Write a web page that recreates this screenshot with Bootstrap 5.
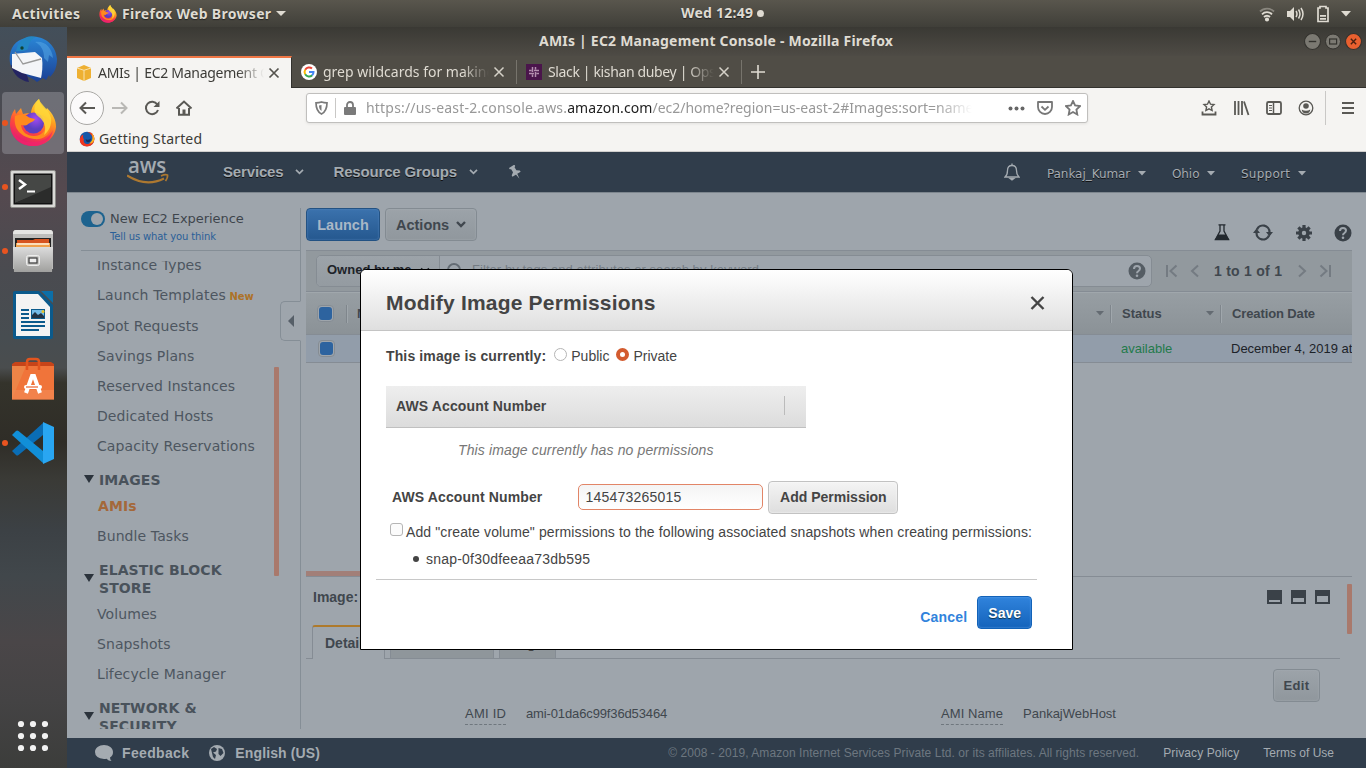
<!DOCTYPE html>
<html lang="en">
<head>
<meta charset="utf-8">
<title>AMIs | EC2 Management Console</title>
<link href="https://cdn.jsdelivr.net/npm/bootstrap@5.3.0/dist/css/bootstrap.min.css" rel="stylesheet">
<style>
:root{--page:#9ea5ac;--rule:#858c94;--navy:#303d4b;--ink:#3e454c;--salmon:#a9796c}
body{width:1366px;height:768px;overflow:hidden;font-family:"Liberation Sans",Arial,sans-serif;font-size:14px;line-height:18px;color:#444;background:var(--page)}
svg{display:block;flex:none}
.ui{font-family:"Noto Sans",sans-serif}
.topbar{height:27px;background:linear-gradient(#59564d,#403f39);color:#dfdbd2;font-weight:600;letter-spacing:.25px;text-shadow:0 1px 1px #222}
.topbar span,.titlebar span{font-weight:700}
.w-act{width:99px;padding-left:12px;letter-spacing:.33px}
.w-app{width:154px;margin-left:5px;letter-spacing:.32px}
.w-clock{left:681px;top:4px}
.dot{width:7px;height:7px;border-radius:50%;background:#dfdbd2}
.tray{margin-left:auto;width:107px}
.shell{height:741px}
.dock{width:67px;background:linear-gradient(180deg,#434f5a 0,#4b4a50 12%,#55494f 22%,#4a4b50 33%,#474d51 42%,#4a4d4e 46%,#34332b 48%,#2f2d27 56%,#3a3a36 61%,#3c4145 68%,#41474b 74%,#4a4648 83%,#444344 91%,#3c3d3b 100%)}
.slot{height:64px;padding-right:1px}
.slot.on::after{content:"";position:absolute;inset:1px 3px 1px 2px;border-radius:4px;background:rgba(170,170,180,.38)}
.slot svg{z-index:1}
.slot.live::before{content:"";position:absolute;left:2px;top:29px;width:6px;height:6px;border-radius:50%;background:#e95420;z-index:2}
.win{width:1299px}
.titlebar{height:29px;background:linear-gradient(#3a3934,#4e4b45);color:#dfdbd2;letter-spacing:.21px}
.titlebar .ttl{padding-left:472px;padding-bottom:2px}
.tabstrip{height:32px;background:#504d46;color:#dfdbd2}
.tabstrip .inact{border-bottom:1px solid #33322e}
.tab-a{width:225px;background:#f5f4f2;border-top:2px solid #f07746;border-right:1px solid #33322e;color:#3c3b37;padding-left:9px}
.tab-i{width:225px;padding-left:9px}
.tab-i::after{content:"";position:absolute;right:0;top:4px;height:24px;width:1px;background:#77746c}
.lbl{overflow:hidden;white-space:nowrap;width:166px;margin-left:6px;-webkit-mask-image:linear-gradient(90deg,#000 84%,transparent 100%);mask-image:linear-gradient(90deg,#000 84%,transparent 100%)}
.toolrow{height:40px;background:#f5f4f2}
.backb{width:34px;height:34px;border-radius:50%;border:1px solid #a9a8a5;background:#fbfafa}
.urlbar{left:239px;top:5px;width:782px;height:30px;border:1px solid #c0bfbd;border-radius:3px;background:#fff;box-shadow:0 1px 3px rgba(0,0,0,.08);color:#989898}
.url{width:608px;overflow:hidden;white-space:nowrap;letter-spacing:.07px;-webkit-mask-image:linear-gradient(90deg,#000 94%,transparent 100%);mask-image:linear-gradient(90deg,#000 94%,transparent 100%)}
.url b{font-weight:400;color:#222}
.vline{width:1px;background:#c9c8c6}
.marks{height:24px;background:#f5f4f2;border-bottom:1px solid #d0cfcd;color:#3c3b37;padding:0 0 2px 12px;letter-spacing:.17px}
.awsnav{height:40px;background:var(--navy);color:#a4abb1;font-weight:700;font-size:15px;letter-spacing:-.16px;text-shadow:0 1px 0 #111}
.awsnav .dj{font:12px/18px "DejaVu Sans",sans-serif;letter-spacing:-.05px;padding-top:3px}
.awsnav .dj + svg{margin-top:2px}
.dj{font-family:"DejaVu Sans",sans-serif}
.console{height:546px;border-top:1px solid #7d868e;background:var(--page)}
.side{width:234px;padding:15px 0 9px 14px}
.side-in{border-right:1px solid #858e96;height:521px}
.exp{height:43px;border-bottom:1px solid #858e96}
.toggle{width:24px;height:16px;border-radius:8px;background:#1d638f;margin-top:3px}
.toggle i{display:block;width:12px;height:12px;border-radius:50%;background:#9ea5ac;margin:2px 0 0 10px}
.exp1{font-size:13px;letter-spacing:-.05px;line-height:21px;color:#3e454c}
.exp2{font-size:10px;line-height:16px;letter-spacing:-.12px;color:#2a5f98}
.menu{margin-top:10px;height:468px;overflow:hidden;color:#4d5660;letter-spacing:.09px}
.menu ul{margin:-11px 0 0;padding:0;list-style:none}
.menu li{height:30px;line-height:30px;padding-left:16px}
.menu li:nth-child(2){height:31px}
.menu li.h{height:auto;line-height:18px;font-weight:700;padding:10px 50px 2px 18px;color:#49525b}
.menu li.h::before{content:"";position:absolute;left:3px;top:calc(50% - 1px);border:5px solid transparent;border-top:8px solid #2b333c;border-bottom:0}
.new{font-size:10px;font-weight:700;color:#ad7228;letter-spacing:-.1px}
.sbar{background:var(--salmon);width:5px;border-radius:1px}
.collapse-tab{left:213px;top:108px;width:21px;height:40px;border:1px solid #858e96;border-right-color:var(--page);border-radius:5px 0 0 5px;background:var(--page)}
.work{width:1065px;padding:15px 14px 0 5px}
.gbtn{height:33px;border:1px solid #838b92;border-radius:4px;background:linear-gradient(#9ca3a9,#90979d);font-weight:700;color:#40474e;box-shadow:inset 0 0 2px #a8afb5}
.bbtn{background:linear-gradient(#3b72ad,#25588f);border-color:#235283;color:#a9b7c6;box-shadow:inset 0 0 2px #5a8ac0}
.filter{height:42px;margin-top:9px;border-top:1px solid var(--rule);border-bottom:1px solid var(--rule);background:#92999e;padding-left:10px}
.tools{height:33px}
.fbox{width:836px;height:32px;margin-top:4px;border:1px solid #858c93;border-radius:5px;background:#9ea5ac;overflow:hidden;font-size:13px}
.fbox span{white-space:nowrap;padding-bottom:2px}
.owned{width:123px;height:30px;border-right:1px solid #858c93;background:linear-gradient(#9ca3a9,#949ba1);font-weight:700;color:#1d2329;padding-left:10px}
.thead-bar{height:43px;background:linear-gradient(#979ea3,#8b9297);border-bottom:1px solid var(--rule);border-top:1px solid #a0a7ac;font-weight:700;font-size:13px;color:#40474e}
.thead-bar>*,.trow>*{flex-shrink:0}
.csep{width:2px;height:18px;background:#7f868c;border-right:1px solid #a0a7ac}
.trow{height:28px;background:#929daa;border-bottom:1px solid var(--rule);font-size:13px;overflow:hidden}
.cb{width:17px;height:17px;border:1px solid #858c93;border-radius:4px;padding:1px;background:#9ea5ac}
.cb i{display:block;width:13px;height:13px;border-radius:3px;background:#2d639f}
.split{top:378px;left:5px;width:1046px;height:6px;border-bottom:1px solid var(--rule)}
.split i{display:block;width:400px;height:5px;background:#a27f78}
.detail{top:384px;left:5px;width:1046px;height:161px}
.tabsrow{height:34px;width:1034px;margin-top:15px;padding-left:6px;border-bottom:1px solid var(--rule)}
.tb{height:33px;border:1px solid var(--rule);border-bottom:0;background:#8f969b}
.tb.act{height:34px;margin-bottom:-1px;width:73px;background:var(--page);border-top:2px solid #ae7a2c;border-radius:3px 3px 0 0;font-weight:700;padding:7px 0 0 12px;color:#40474e}
.kv{font-size:13px;color:#40474e}
.kv u{text-decoration:none;display:inline-block;height:20px;line-height:18px;border-bottom:1px dashed #6f777e}
.foot{height:30px;background:var(--navy);color:#a4abb1;font-size:12px}
.foot b{font-size:14px}
.foot .copy{color:#6d7780}
/* dialog */
.dlg{left:360px;top:269px;width:713px;height:381px;border:1px solid #000;border-radius:6px 6px 0 0;background:#fff;color:#444;z-index:20;letter-spacing:.13px}
.dlg-h{height:61px;border-bottom:1px solid #c4c4c4;border-radius:5px 5px 0 0;background:linear-gradient(#fff,#dfdfdf);padding:6px 27px 0 25px}
.dlg-h h1{font-size:21px;font-weight:700;letter-spacing:.2px;line-height:30px;margin:0}
.rad{width:13px;height:13px;border:1px solid #b5b5b5;border-radius:50%;background:#fff}
.rad.on{border:4px solid #d35b2f;background:#fff}
.permhead{width:420px;height:42px;background:linear-gradient(#eee,#dcdcdc);border-bottom:1px solid #c0c0c0;padding:0 21px 2px 10px}
.acct{width:185px;height:26px;margin:0 0 1px 36px;border:1px solid #e28567;border-radius:5px;padding:0 6px;background:linear-gradient(#f4f4f4,#fff);color:#444;font-size:14px;letter-spacing:.23px}
.pbtn{height:33px;border:1px solid #c2c2c2;border-radius:4px;font-weight:700;background:linear-gradient(#f4f4f4,#dedede);color:#444;padding:0 10px;box-shadow:inset 0 0 2px #fff}
.pbtn.add{width:130px;padding-bottom:2px}
.pbtn.save{background:linear-gradient(#3083dc,#1463bb);border-color:#1262b8;color:#fff;text-shadow:0 1px 1px #134;box-shadow:inset 0 0 2px #6aaaf0}
</style>
</head>
<body>
<!-- GNOME panel -->
<header class="topbar ui d-flex align-items-center position-relative">
  <span class="w-act">Activities</span>
  <svg width="18" height="18" viewBox="0 0 48 48"><use href="#fx"/></svg>
  <span class="w-app">Firefox Web Browser</span>
  <svg width="10" height="6"><path d="M0 0h10l-5 5z" fill="#dfdbd2"/></svg>
  <div class="w-clock position-absolute d-flex align-items-center gap-1"><span>Wed 12:49</span><i class="dot"></i></div>
  <div class="tray d-flex align-items-center">
    <svg width="16" height="16" viewBox="0 0 16 16" fill="none" stroke="#dfdbd2" stroke-width="1.800"><path d="M1 5.500a10 10 0 0 1 14 0" opacity=".4"/><path d="M3 8.300a7 7 0 0 1 10 0M5 11a4.200 4.200 0 0 1 6 0"/><circle cx="8" cy="13.500" r="1.200" fill="#dfdbd2"/></svg>
    <svg style="margin-left:11px" width="18" height="16" viewBox="0 0 18 16"><path d="M1 5h3l4-4v14l-4-4H1z" fill="#dfdbd2"/><path d="M10 5q2 3 0 6M12.500 3.500q3 4.500 0 9M15 2q4 6 0 12" stroke="#dfdbd2" fill="none" stroke-width="1.500"/></svg>
    <svg style="margin-left:11px" width="16" height="18" viewBox="0 0 16 18"><path d="M5 3V1.500h6V3h2v13.500H3V3z" fill="none" stroke="#dfdbd2" stroke-width="1.700"/><path d="M5 10h6v1.800H5zM5 13h6v1.800H5z" fill="#dfdbd2"/></svg>
    <svg style="margin-left:10px" width="10" height="6"><path d="M0 0h10l-5 5.500z" fill="#dfdbd2"/></svg>
  </div>
</header>

<svg width="0" height="0" class="position-absolute">
  <defs>
    <linearGradient id="g1" x1=".8" y1="0" x2=".3" y2="1"><stop offset="0" stop-color="#fff44f"/><stop offset=".35" stop-color="#ffa21e"/><stop offset=".65" stop-color="#ff4a3a"/><stop offset="1" stop-color="#e01577"/></linearGradient>
    <radialGradient id="g2" cx=".6" cy=".3"><stop offset="0" stop-color="#a24bf0"/><stop offset="1" stop-color="#5a3fc0"/></radialGradient>
    <linearGradient id="g3" x1="0" y1="0" x2="0" y2="1"><stop offset="0" stop-color="#2a86d6"/><stop offset="1" stop-color="#1b3f94"/></linearGradient>
    <linearGradient id="g4" x1="0" y1="0" x2="0" y2="1"><stop offset="0" stop-color="#dcdcdc"/><stop offset="1" stop-color="#a0a09e"/></linearGradient>
    <g id="fx">
      <path d="M24 47C11 47 1 38 1 25c0-6 2-11 5-15l1 5 5-6 2 6c3-1 6-1 8 0 0-6 3-11 8-15 1 5 4 8 7 11l1-2c6 6 9 12 9 19C46 39 36 47 24 47z" fill="url(#g1)"/>
      <circle cx="24.500" cy="24" r="10.500" fill="url(#g2)"/>
      <path d="M6 17c4-2 8-2 12 0 2 2 5 2 8 3-1 3-5 3-8 6-2 1-4 0-6 0 1 7 6 11 13 11 8 0 12-6 12-12 0-4-2-7-5-9 7 1 11 6 10 13-2 8-9 12-17 11C12 38 4 30 6 17z" fill="#ff8a1e"/>
      <path d="M30 0c1 5 10 10 12 19 1 7-2 13-7 17 3-8 0-14-5-18-7-5-5-12 0-18z" fill="#ffd83a" opacity=".85"/>
      <path d="M2 28c3 11 12 16 22 15 10 0 17-5 20-12-2 10-9 16-20 16S4 40 2 28z" fill="#f0246b" opacity=".8"/>
    </g>
    <g id="q"><circle cx="9" cy="9" r="8.500"/><path d="M6 7q0-3 3-3t3 2.600q0 1.500-1.500 2.400T9 11.200" fill="none" stroke="#9ea5ac" stroke-width="2"/><circle cx="9" cy="13.700" r="1.300" fill="#9ea5ac"/></g>
  </defs>
</svg>

<div class="shell d-flex">
<!-- launcher -->
<nav class="dock d-flex flex-column">
  <div class="slot position-relative d-flex align-items-center justify-content-center">
    <svg width="50" height="50" viewBox="0 0 50 50"><path d="M18 4C34-1 48 10 49 25c0 9-3 14-7 18l-1-2-3 5-3-2-6 4C20 40 5 40 2 29 0 17 6 6 18 4z" fill="url(#g3)"/><path d="M3 31c2 10 10 16 18 17l-2-7z" fill="#242462"/><path d="M4 20l23-2 7 6c1 8 0 15-1 20L14 39 4 34z" fill="#f4f5f8"/><path d="M7 18l8 12 18-5" fill="none" stroke="#999" stroke-width="1.300"/><path d="M8 17C10 5 20 0 28 3c-5 2-7 6-8 12-4 3-8 2-12 2z" fill="#2386c4"/><path d="M27 8c9-2 17 5 18 16l-4-3-1 7-4-4c0-8-3-13-9-16z" fill="#55a8e6" opacity=".55"/><circle cx="14" cy="14" r="1.700" fill="#143"/></svg></div>
  <div class="slot on live position-relative d-flex align-items-center justify-content-center"><svg class="position-relative" width="48" height="48" viewBox="0 0 48 48"><use href="#fx"/></svg></div>
  <div class="slot live position-relative d-flex align-items-center justify-content-center" style="padding-top:3px">
    <svg width="46" height="38" viewBox="0 0 46 38"><rect x=".5" y=".5" width="45" height="37" rx="1.500" fill="#d9d9d6" stroke="#8b8b88"/><rect x="3.500" y="3.500" width="39" height="31" fill="#111"/><path d="M5 5h36v14L5 33z" fill="#454745"/><path d="M5 33l36-16v16z" fill="#2b2c2b"/><path d="M9 10l6 4.500L9 19" fill="none" stroke="#fff" stroke-width="2.500"/><path d="M17 21.500h8" stroke="#fff" stroke-width="2"/></svg></div>
  <div class="slot live position-relative d-flex align-items-center justify-content-center">
    <svg width="42" height="44" viewBox="0 0 42 44"><path d="M1 4q0-3 3-3h34q3 0 3 3v36H1z" fill="#bdbdbb"/><path d="M1 5q0-4 3-4h34q3 0 3 4z" fill="#e5e5e3"/><rect x="3" y="9" width="36" height="12" fill="#222"/><path d="M5 11h16l2-1h14v5H5z" fill="#d6531f"/><path d="M4 14h34v5H4z" fill="#f0a04b"/><path d="M5 15h32" stroke="#fff2df" stroke-width="1.500"/><path d="M1 18h40l-1 25H2z" fill="url(#g4)"/><rect x="14.500" y="26.500" width="13" height="10" rx="2" fill="#c9c9c7" stroke="#eee"/><rect x="17" y="29" width="8" height="5" fill="#eee" stroke="#444" stroke-width="1.300"/></svg></div>
  <div class="slot position-relative d-flex align-items-center justify-content-center">
    <svg width="40" height="48" viewBox="0 0 40 48"><path d="M2 0h24l14 14v32q0 2-2 2H2q-2 0-2-2V2q0-2 2-2z" fill="#0b5a8c"/><path d="M28 0h12v12z" fill="#0c6fa8"/><path d="M3 3h22l12 13v29H3z" fill="#f3f3f3"/><path d="M8 19h8M8 23h8M8 27h8M8 31h24M8 35h24M8 39h18" stroke="#0b5a8c" stroke-width="2"/><rect x="18.500" y="18.500" width="13" height="9" fill="#73bbe8" stroke="#0b5a8c"/><path d="M19 27v-3l3-3 3 3 3-2 3 3v2z" fill="#234"/><circle cx="30" cy="20.500" r="1.500" fill="#e9c62a"/></svg></div>
  <div class="slot position-relative d-flex align-items-center justify-content-center">
    <svg width="42" height="44" viewBox="0 0 42 44"><path d="M0 7l3-2h36l3 2v6H0z" fill="#c74419"/><path d="M0 9h42v33.500H0z" fill="#f0743a"/><path d="M0 9h14L0 42z" fill="#eb8f50" opacity=".6"/><path d="M0 33h42v9.500H0z" fill="#f38c57" opacity=".6"/><path d="M15 13V5q0-3 3-3h6q3 0 3 3v8" fill="none" stroke="#e2551f" stroke-width="2.500"/><path d="M14 36l6-17h2l6 17" fill="none" stroke="#fff" stroke-width="4"/><rect x="12" y="28" width="18" height="4" rx="2" fill="#fff"/><path d="M14 30h12" stroke="#e9622c" stroke-width="1.200"/></svg></div>
  <div class="slot live position-relative d-flex align-items-center justify-content-center">
    <svg width="42" height="42" viewBox="0 0 42 42"><path d="M0 29l4 4q1 1 2.500 0L31 13V1z" fill="#0a6db5"/><path d="M0 13l4-4q1-1 2.500 0L31 29v12z" fill="#118fd8"/><path d="M31 0l11 5v32l-11 5z" fill="#29a6f2"/></svg></div>
  <div class="mt-auto d-flex justify-content-center pb-3 pe-1"><svg width="32" height="32" viewBox="-1 0 32 32" fill="#f2f2f2"><circle cx="4" cy="4" r="3.100"/><circle cx="16" cy="4" r="3.100"/><circle cx="28" cy="4" r="3.100"/><circle cx="4" cy="16" r="3.100"/><circle cx="16" cy="16" r="3.100"/><circle cx="28" cy="16" r="3.100"/><circle cx="4" cy="28" r="3.100"/><circle cx="16" cy="28" r="3.100"/><circle cx="28" cy="28" r="3.100"/></svg></div>
</nav>

<div class="win d-flex flex-column">
  <!-- window title -->
  <div class="titlebar ui d-flex align-items-center">
    <span class="ttl">AMIs | EC2 Management Console - Mozilla Firefox</span>
    <div class="d-flex ms-auto gap-1 pe-1 me-0">
      <svg width="17" height="17" viewBox="0 0 16 16"><circle cx="8" cy="8" r="7.500" fill="#7b7972" stroke="#33322e"/><path d="M4.500 8h7" stroke="#33322e" stroke-width="1.300"/></svg>
      <svg width="16" height="17" viewBox="0 0 16 16"><circle cx="8" cy="8" r="7.500" fill="#7b7972" stroke="#33322e"/><rect x="4.600" y="5.500" width="7" height="5" fill="none" stroke="#33322e" stroke-width="1.200"/></svg>
      <svg width="17" height="17" viewBox="0 0 16 16"><circle cx="8" cy="8" r="7.500" fill="#e9602f" stroke="#33322e"/><path d="M5.500 5.500l5 5m0-5l-5 5" stroke="#4a2010" stroke-width="1.300"/></svg>
    </div>
  </div>
  <!-- tabs -->
  <div class="tabstrip ui d-flex">
    <div class="tab-a d-flex align-items-center">
      <svg width="16" height="16" viewBox="0 0 16 16"><path d="M1 3l7-3 7 3v10l-7 3-7-3z" fill="#eeb032"/><path d="M1 3l7 2.300L15 3M8 5.300V16" stroke="#f9e2ae" fill="none"/></svg>
      <span class="lbl" style="letter-spacing:-.28px">AMIs | EC2 Management Console</span>
      <svg style="margin-left:4px" width="12" height="12"><path d="M1.500 1.500l9 9m0-9l-9 9" stroke="#55534e" stroke-width="1.700"/></svg>
    </div>
    <div class="inact d-flex flex-grow-1">
      <div class="tab-i d-flex align-items-center position-relative">
        <svg width="16" height="16" viewBox="0 0 16 16"><circle cx="8" cy="8" r="8" fill="#fff"/><g fill="none" stroke-width="2"><path d="M4.200 5.800A4.500 4.500 0 0 1 11 4.500" stroke="#ea4335"/><path d="M4.200 10.300a4.500 4.500 0 0 1 0-4.600" stroke="#fbbc05"/><path d="M11.200 11.200a4.500 4.500 0 0 1-7-1" stroke="#34a853"/><path d="M8 8h4.500a4.500 4.500 0 0 1-1.400 3.300" stroke="#4285f4"/></g></svg>
        <span class="lbl">grep wildcards for making</span>
        <svg style="margin-left:4px" width="12" height="12"><path d="M1.500 1.500l9 9m0-9l-9 9" stroke="#d5d1c8" stroke-width="1.500"/></svg>
      </div>
      <div class="tab-i d-flex align-items-center position-relative">
        <svg width="16" height="16"><path d="M0 0h16v16H0z" fill="#4a154b"/><path d="M6.500 3v5M9.500 8v5M3 9.500h5M8 6.500h5M3 6.500h2.500M10.500 9.500H13M6.500 10.500V13M9.500 3v2.500" stroke="#b58fb0" stroke-width="1.500"/></svg>
        <span class="lbl" style="letter-spacing:-.36px">Slack | kishan dubey | OpsWorks</span>
        <svg style="margin-left:4px" width="12" height="12"><path d="M1.500 1.500l9 9m0-9l-9 9" stroke="#d5d1c8" stroke-width="1.500"/></svg>
      </div>
      <svg class="align-self-center ms-2" width="16" height="16"><path d="M8 1v14M1 8h14" stroke="#dfdbd2" stroke-width="1.600"/></svg>
    </div>
  </div>
  <!-- navigation toolbar -->
  <div class="toolrow ui d-flex align-items-center position-relative ps-1">
    <div class="backb d-flex align-items-center justify-content-center" style="margin-left:-1px"><svg width="16" height="14"><path d="M16 7H1.500M7 1.500L1.500 7 7 12.500" fill="none" stroke="#5a5955" stroke-width="2"/></svg></div>
    <svg class="ms-2" width="16" height="14"><path d="M0 7h14.500M9 1.500L14.500 7 9 12.500" fill="none" stroke="#b9b8b5" stroke-width="2"/></svg>
    <svg class="ms-3" width="16" height="16"><path d="M13.300 4.500A6.200 6.200 0 1 0 14 10" fill="none" stroke="#5a5955" stroke-width="2"/><path d="M15.500 1v6h-6z" fill="#5a5955"/></svg>
    <svg class="ms-3" width="17" height="16" viewBox="1 0 17 16"><path d="M1.500 8.500L9 1.500l7.500 7M4 8v6.800h10V8" fill="none" stroke="#5a5955" stroke-width="2"/><path d="M7.500 9.500h3V15h-3z" fill="#5a5955"/></svg>
    <div class="urlbar position-absolute d-flex align-items-center">
      <svg style="margin-left:8px" width="13" height="14"><path d="M1 1.800Q4 1.800 6.500 1q2.500.8 5.500.8 0 8.500-5.500 11.200Q1 10.300 1 1.800z" fill="none" stroke="#7a7a7a" stroke-width="1.700"/><path d="M6.500 4v6Q4 8.500 4 4.500z" fill="#7a7a7a"/></svg>
      <i class="vline align-self-stretch my-1" style="margin-left:7px"></i>
      <svg class="ms-2" width="12" height="14"><rect y="6" width="12" height="8" rx="1" fill="#7a7a7a"/><path d="M3 7V4a3 3 0 0 1 6 0v3" fill="none" stroke="#7a7a7a" stroke-width="1.800"/></svg>
      <span class="url ms-2" style="padding-left:2px"><span style="letter-spacing:.19px">https://us-east-2.console.aws.</span><b>amazon.com</b><span style="letter-spacing:0">/ec2/home?region=us-east-2#Images:sort=name</span></span>
      <svg class="ms-auto" width="17" height="5" fill="#666"><circle cx="2.500" cy="2.500" r="2"/><circle cx="8.500" cy="2.500" r="2"/><circle cx="14.500" cy="2.500" r="2"/></svg>
      <svg style="margin-left:12px" width="16" height="15"><path d="M1 1h14v5a7 7 0 0 1-14 0z" fill="none" stroke="#777" stroke-width="1.800" stroke-linejoin="round"/><path d="M4.500 5.500L8 8.800l3.500-3.300" fill="none" stroke="#777" stroke-width="1.800"/></svg>
      <svg style="margin:0 6px 0 12px" width="16" height="16"><path d="M8 1l2.100 4.500 4.900.6-3.600 3.400.9 5L8 12l-4.300 2.500.9-5L1 6.100l4.900-.6z" fill="none" stroke="#777" stroke-width="1.800"/></svg>
    </div>
    <div class="d-flex align-items-center ms-auto gap-3" style="padding-right:2px">
      <svg width="16" height="16"><path d="M8 1l1.500 3.200 3.500.4-2.600 2.400.7 3.500L8 8.800l-3.100 1.700.7-3.500L3 4.600l3.500-.4z" fill="none" stroke="#5a5955" stroke-width="1.400"/><path d="M1.500 11.500v3h13v-3" fill="none" stroke="#5a5955" stroke-width="1.800"/></svg>
      <svg width="17" height="16" fill="none" stroke="#5a5955" stroke-width="1.800"><path d="M2 1v14M5.500 1v14M9 1v14M11 1.500L15.500 15"/></svg>
      <svg width="16" height="16" fill="none" stroke="#5a5955"><rect x="1" y="2" width="14" height="12" rx="1.500" stroke-width="1.800"/><path d="M7.500 2v12" stroke-width="1.500"/><path d="M3 5.500h3M3 8h3M3 10.500h3"/></svg>
      <svg width="16" height="16"><circle cx="8" cy="8" r="6.800" fill="none" stroke="#5a5955" stroke-width="1.300"/><circle cx="8" cy="6" r="2.800" fill="#5a5955"/><path d="M3.700 9.500q4.300 2.500 8.600 0-.5 4-4.300 4t-4.300-4z" fill="#5a5955"/></svg>
      <i class="vline" style="height:34px;margin-left:-5px"></i>
      <svg width="22" height="14" viewBox="3 0 22 14"><path d="M3 2h12M3 7h12M3 12h12" stroke="#5a5955" stroke-width="2"/></svg>
    </div>
  </div>
  <div class="marks ui d-flex align-items-center"><svg width="16" height="16" viewBox="0 0 48 48"><circle cx="24" cy="24" r="22" fill="#1558a8"/><path d="M25 3c14 6 19 18 14 28-3 6-9 9-15 8-8-1-12-8-9-14 0 0-5-5-2-14C4 12-1 26 5 37c9 13 29 13 38-1 6-12 3-24-6-31z" fill="#f0361f"/><path d="M37 6c8 14 2 27-7 31 8 2 16-4 16-13 0-8-4-14-9-18z" fill="#ffb41e"/><path d="M20 24q8 6 16-2-1 12-9 12-7-1-7-10z" fill="#17305f"/></svg><span class="ms-1">Getting Started</span></div>

  <!-- console navigation -->
  <div class="awsnav d-flex align-items-center">
    <svg style="margin-left:60px" width="42" height="28" viewBox="0 0 42 28"><text x="1" y="15" font-family="Open Sans,sans-serif" font-weight="600" font-size="22" textLength="38" lengthAdjust="spacingAndGlyphs" fill="#a4abb1" style="text-shadow:none">aws</text><path d="M0 17.500q19 12 37 3" fill="none" stroke="#ad7830" stroke-width="2.200"/><path d="M34 18q4-2 6.500-1 .5 2.500-2 6" fill="none" stroke="#ad7830" stroke-width="1.700"/></svg>
    <span style="margin-left:54px">Services</span>
    <svg style="margin-left:12px" width="9" height="6"><path d="M1 .8L4.500 4.300 8 .8" fill="none" stroke="#a4abb1" stroke-width="1.700"/></svg>
    <span style="margin-left:29px">Resource Groups</span>
    <svg style="margin-left:12px" width="9" height="6"><path d="M1 .8L4.500 4.300 8 .8" fill="none" stroke="#a4abb1" stroke-width="1.700"/></svg>
    <svg style="margin-left:31px" width="13" height="15" viewBox="-6.500 -7.500 13 15"><path transform="rotate(-32)" d="M-3.200-7.300h6.400v1.600L2-5v3.500l2.800 2V2H-4.800V.5l2.800-2V-5l-1.200-.7zM-.8 2H.8L0 7.500z" fill="#a4abb1"/></svg>
    <svg style="margin-left:482px" width="16" height="18" fill="none" stroke="#a4abb1" stroke-width="1.300"><path d="M1 14h14q-2.500-2-2.500-6.500 0-5-4.500-5t-4.500 5Q3.500 12 1 14z"/><path d="M8 .5v2"/><path d="M6 15.500h4l-2 1.500z" fill="#a4abb1"/></svg>
    <span class="dj" style="margin-left:27px;width:91px">Pankaj_Kumar</span><svg width="8" height="5"><path d="M0 0h8L4 4.500z" fill="#a4abb1"/></svg>
    <span class="dj" style="margin-left:26px;width:35px">Ohio</span><svg width="8" height="5"><path d="M0 0h8L4 4.500z" fill="#a4abb1"/></svg>
    <span class="dj" style="margin-left:26px;width:57px;letter-spacing:.26px">Support</span><svg width="8" height="5"><path d="M0 0h8L4 4.500z" fill="#a4abb1"/></svg>
  </div>

  <div class="console d-flex position-relative">
    <aside class="side position-relative">
      <div class="side-in">
        <div class="exp d-flex dj">
          <div class="toggle"><i></i></div>
          <div class="ms-1"><div class="exp1 ps-0" style="margin-left:1px">New EC2 Experience</div><div class="exp2" style="margin-left:1px">Tell us what you think</div></div>
        </div>
        <div class="menu dj">
          <ul>
            <li>Instance Types</li>
            <li style="letter-spacing:.16px">Launch Templates <span class="new" style="margin-left:-1px">New</span></li>
            <li>Spot Requests</li>
            <li>Savings Plans</li>
            <li>Reserved Instances</li>
            <li>Dedicated Hosts</li>
            <li>Capacity Reservations</li>
            <li class="h position-relative">IMAGES</li>
            <li style="color:#a4683a;padding-left:17px"><b>AMIs</b></li>
            <li>Bundle Tasks</li>
            <li class="h position-relative">ELASTIC BLOCK STORE</li>
            <li>Volumes</li>
            <li>Snapshots</li>
            <li>Lifecycle Manager</li>
            <li class="h position-relative">NETWORK &amp; SECURITY</li>
          </ul>
        </div>
      </div>
      <i class="sbar position-absolute" style="left:207px;top:174px;height:209px"></i>
      <div class="collapse-tab position-absolute d-flex align-items-center"><svg style="margin-left:7px" width="6" height="12"><path d="M6 0v12L0 6z" fill="#565f68"/></svg></div>
    </aside>

    <main class="work position-relative">
      <div class="tools d-flex">
        <div class="gbtn bbtn d-flex align-items-center justify-content-center" style="width:74px;font-size:14.500px">Launch</div>
        <div class="gbtn d-flex align-items-center" style="width:92px;margin-left:5px;padding-left:10px;font-size:14.500px">Actions<svg style="margin-left:7px" width="10" height="8"><path d="M1 1l4 4 4-4" fill="none" stroke="#40474e" stroke-width="2.400"/></svg></div>
        <div class="d-flex ms-auto align-items-center pt-3">
          <svg style="margin-right:23px" width="16" height="17"><path d="M4.500.8h7M6 1v6L1.500 15.500h13L10 7V1" fill="none" stroke="#23292f" stroke-width="1.300"/><path d="M4 10.500h8l3.500 5.500H.5z" fill="#23292f"/></svg>
          <svg style="margin-right:23px" width="20" height="17" fill="none" stroke="#3a4148" stroke-width="2.200"><path d="M4 5.500A6.500 6.500 0 0 1 16.500 8M16 11.500A6.500 6.500 0 0 1 3.500 9"/><path d="M13 8h7l-3.500 4.500zM0 9h7L3.500 4.500z" fill="#3a4148" stroke="none"/></svg>
          <svg style="margin-right:22px" width="16" height="16" viewBox="-8 -8 16 16"><circle r="4" fill="none" stroke="#3a4148" stroke-width="3.600"/><path d="M0-8v3M0 8V5M-8 0h3M8 0H5M-5.600-5.600l2 2M5.600 5.600l-2-2M-5.600 5.600l2-2M5.600-5.600l-2 2" stroke="#3a4148" stroke-width="3.200"/></svg>
          <svg width="18" height="18" fill="#3a4148"><use href="#q"/></svg>
        </div>
      </div>
      <div class="filter d-flex">
        <div class="fbox d-flex align-items-center">
          <div class="owned d-flex align-items-center"><span>Owned by me</span><svg style="margin-left:8px" width="10" height="8"><path d="M1 1.500l4 4 4-4" fill="none" stroke="#1d2329" stroke-width="1.800"/></svg></div>
          <svg style="margin-left:7px" width="16" height="18"><circle cx="7" cy="8" r="6" fill="none" stroke="#646c74" stroke-width="2"/><path d="M11 13l4 4" stroke="#646c74" stroke-width="2"/></svg>
          <span style="margin-left:9px;letter-spacing:.06px;color:#747c84">Filter by tags and attributes or search by keyword</span>
          <svg class="ms-auto" width="18" height="18" fill="#555d64" style="margin-right:5px;margin-bottom:1px"><use href="#q"/></svg>
        </div>
        <div class="d-flex align-items-center" style="margin-left:14px;letter-spacing:.26px;color:#40474e">
          <svg width="12" height="14" fill="none" stroke="#747b82" stroke-width="2"><path d="M1 1v12M10.500 1.500L4.500 7l6 5.500"/></svg>
          <svg style="margin-left:12px" width="10" height="14" fill="none" stroke="#747b82" stroke-width="2"><path d="M8 1.500L2 7l6 5.500"/></svg>
          <b style="margin-left:14px;width:70px;white-space:nowrap">1 to 1 of 1</b>
          <svg style="margin-left:13px" width="10" height="14" fill="none" stroke="#747b82" stroke-width="2"><path d="M2 1.500L8 7l-6 5.500"/></svg>
          <svg style="margin-left:12px" width="12" height="14" fill="none" stroke="#747b82" stroke-width="2"><path d="M11 1v12M1.500 1.500L7.500 7l-6 5.500"/></svg>
        </div>
      </div>
      <div class="thead-bar d-flex align-items-center">
        <div class="cb" style="margin-left:11px"><i></i></div><i class="csep" style="margin-left:12px"></i><span style="margin-left:9px;width:739px">Name</span>
        <svg width="8" height="5"><path d="M0 0h8L4 4.500z" fill="#646b72"/></svg><i class="csep" style="margin-left:6px"></i>
        <span style="margin-left:10px;width:84px">Status</span><svg width="8" height="5"><path d="M0 0h8L4 4.500z" fill="#646b72"/></svg><i class="csep" style="margin-left:6px"></i>
        <span style="margin-left:10px;letter-spacing:-.12px">Creation Date</span>
      </div>
      <div class="trow d-flex align-items-center">
        <div class="cb" style="margin-left:12px"><i></i></div>
        <span style="margin-left:786px;width:110px;color:#237a4b">available</span><span class="text-nowrap" style="color:#1c2228">December 4, 2019 at</span>
      </div>
      <div class="split position-absolute"><i></i></div>
      <section class="detail position-absolute">
        <div class="d-flex align-items-start" style="padding:11px 22px 0 7px;height:33px">
          <b style="color:#40474e">Image: ami-01da6c99f36d53464</b>
          <svg class="ms-auto" style="margin-top:2px" width="63" height="14" fill="#3a4148"><path d="M0 0h15v14H0zM24 0h15v14H24zM48 0h15v14H48z"/><path d="M2 10h11v2H2zM26 8h11v4H26zM50 6h11v6H50z" fill="#9ea5ac"/></svg>
        </div>
        <div class="tabsrow d-flex align-items-end">
          <div class="tb act">Details</div><div class="tb text-center" style="width:104px;margin-left:5px;padding-top:7px;font-weight:700">Permissions</div><div class="tb text-center" style="width:57px;margin-left:5px;padding-top:8px;font-weight:700">Tags</div>
        </div>
        <div class="d-flex justify-content-end" style="padding:10px 32px 0 0;height:46px"><div class="gbtn d-flex align-items-center justify-content-center" style="width:47px;font-size:13px;letter-spacing:.3px">Edit</div></div>
        <div class="kv d-flex" style="padding-left:159px">
          <div style="width:61px"><u style="letter-spacing:.25px">AMI ID</u></div><div style="width:415px;letter-spacing:-.13px">ami-01da6c99f36d53464</div>
          <div style="width:82px"><u style="letter-spacing:.08px">AMI Name</u></div><div>PankajWebHost</div>
        </div>
        <i class="sbar position-absolute" style="right:0;top:7px;height:50px"></i>
      </section>
    </main>
  </div>

  <footer class="foot d-flex align-items-center">
    <svg style="margin-left:28px" width="18" height="17"><path d="M9 0c5 0 9 3 9 7 0 3-1 4-3 5.500q0 2 1.500 3.500-3 0-5-2.300Q10.500 14 9 14 0 13 0 7c0-4 4-7 9-7z" fill="#a4abb1"/></svg>
    <b style="margin-left:9px;letter-spacing:.34px">Feedback</b>
    <svg style="margin-left:20px" width="16" height="16"><circle cx="8" cy="8" r="8" fill="#a4abb1"/><path d="M2 4l3-2 3 2-1 2.500-3 1L7 10l-1 4-2-2-1-4zM9.500 3l3.500 1 1.500 4-3 3-2-2z" fill="#303d4b"/></svg>
    <b style="margin-left:10px;letter-spacing:.13px">English (US)</b>
    <span class="copy ms-auto text-nowrap" style="letter-spacing:.06px">© 2008 - 2019, Amazon Internet Services Private Ltd. or its affiliates. All rights reserved.</span>
    <span style="margin-left:24px;letter-spacing:.1px">Privacy Policy</span>
    <span style="margin:0 32px 0 24px">Terms of Use</span>
  </footer>
</div>
</div>

<!-- permissions dialog -->
<div class="dlg position-absolute">
  <div class="dlg-h d-flex align-items-center justify-content-between"><h1>Modify Image Permissions</h1><svg width="15" height="14"><path d="M1.500 1l12 12M13.500 1l-12 12" stroke="#444" stroke-width="2.400"/></svg></div>
  <div class="d-flex" style="padding:16px 0 0 25px;height:55px">
    <b>This image is currently:</b>
    <i class="rad" style="margin:1px 4px 0 8px"></i><span style="letter-spacing:0">Public</span>
    <i class="rad on" style="margin:1px 4px 0 7px"></i><span style="letter-spacing:0">Private</span>
  </div>
  <div style="padding-left:25px">
    <div class="permhead d-flex align-items-center justify-content-between"><b>AWS Account Number</b><i class="vline" style="height:19px;background:#bbb"></i></div>
    <div style="padding:13px 0 0 72px;height:53px;color:#777"><em>This image currently has no permissions</em></div>
  </div>
  <div class="d-flex align-items-center" style="padding-left:31px;height:33px">
    <b class="pb-1" style="margin-top:2px">AWS Account Number</b><input class="acct" value="145473265015" aria-label="AWS Account Number"><button class="pbtn add" style="margin-left:5px">Add Permission</button>
  </div>
  <div class="d-flex" style="padding:9px 0 0 29px">
    <i style="width:13px;height:13px;border:1px solid #b5b5b5;border-radius:3px;margin:0 3px 0 0;background:#fbfbfb"></i><span style="letter-spacing:.12px">Add "create volume" permissions to the following associated snapshots when creating permissions:</span>
  </div>
  <div class="d-flex align-items-center" style="padding:9px 0 0 52px"><i style="width:6px;height:6px;border-radius:50%;background:#444;margin-right:7px"></i><span style="letter-spacing:.21px">snap-0f30dfeeaa73db595</span></div>
  <div style="margin:11px 35px 0 15px;border-top:1px solid #c8c8c8;padding:16px 5px 0 0" class="d-flex justify-content-end">
    <b style="color:#3083dc;padding-top:12px;letter-spacing:.2px">Cancel</b><button class="pbtn save" style="margin-left:10px">Save</button>
  </div>
</div>
<script src="https://cdn.jsdelivr.net/npm/bootstrap@5.3.0/dist/js/bootstrap.bundle.min.js"></script>
</body>
</html>
